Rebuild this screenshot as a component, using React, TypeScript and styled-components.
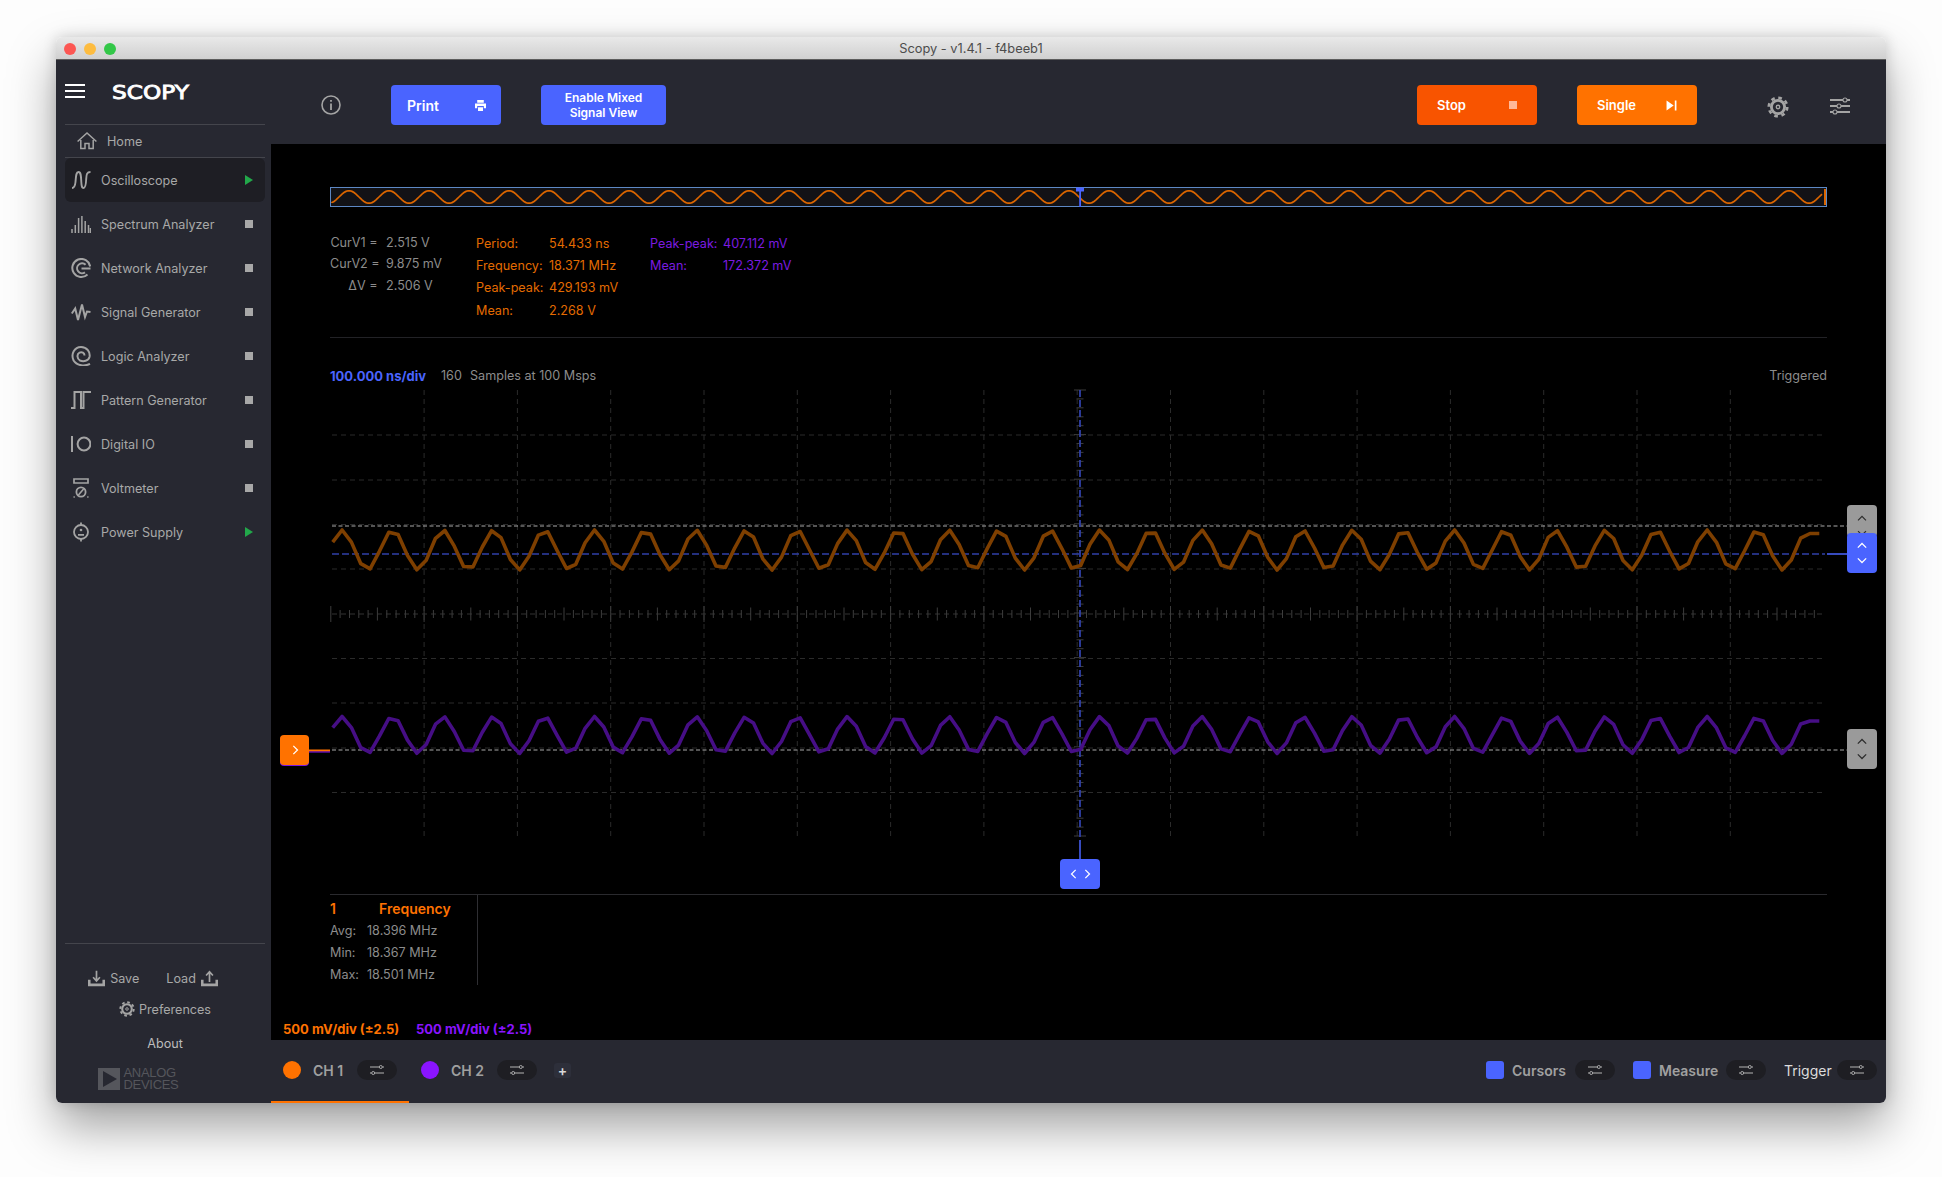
import React from "react";
import styled, { createGlobalStyle } from "styled-components";

const BLUE = "#4a64ff";
const ORANGE = "#ff7200";
const PURPLE = "#8a14ff";
const PANEL = "#272831";

const GlobalStyle = createGlobalStyle`
  html, body {
    margin: 0;
    padding: 0;
    background: #fdfdfd;
  }
  body {
    font-family: "Inter", "Liberation Sans", sans-serif;
    font-size: 12.6px;
    -webkit-font-smoothing: antialiased;
  }
`;

const Page = styled.div`
  width: 1942px;
  height: 1177px;
  padding: 37px 56px 0;
  box-sizing: border-box;
  overflow: hidden;
`;

const Window = styled.div`
  height: 1066px;
  display: flex;
  flex-direction: column;
  border-radius: 6px;
  overflow: hidden;
  box-shadow: 0 24px 48px rgba(0, 0, 0, 0.36), 0 0 14px rgba(0, 0, 0, 0.16);
`;

const TitleBar = styled.div`
  position: relative;
  height: 22px;
  padding-top: 1px;
  box-sizing: border-box;
  flex-shrink: 0;
  display: flex;
  align-items: center;
  justify-content: center;
  background: linear-gradient(#e9e9e9, #d0d0d0);
  color: #4c4c4c;
  font-size: 12.8px;
`;

const TitleEdge = styled.div`
  height: 1px;
  flex-shrink: 0;
  background: #5c5c5c;
`;

const Lights = styled.div`
  position: absolute;
  left: 8px;
  top: 6px;
  display: flex;
  gap: 8px;
`;

const Light = styled.span<{ $color: string }>`
  width: 12px;
  height: 12px;
  border-radius: 50%;
  background: ${(p) => p.$color};
`;

const Body = styled.div`
  flex: 1;
  display: flex;
  min-height: 0;
`;

const Sidebar = styled.aside`
  width: 215px;
  flex-shrink: 0;
  box-sizing: border-box;
  padding: 0 6px 0 9px;
  background: ${PANEL};
  display: flex;
  flex-direction: column;
  color: #a8a8a8;
`;

const Brand = styled.div`
  height: 65px;
  flex-shrink: 0;
  box-sizing: border-box;
  padding-top: 18px;
  display: flex;
  align-items: center;
  gap: 27px;
  border-bottom: 1px solid #44454c;
`;

const Hamburger = styled.div`
  width: 20px;
  height: 14px;
  margin-top: -20px;
  border-top: 2px solid #fff;
  border-bottom: 2px solid #fff;
  position: relative;
  box-sizing: border-box;
  &::after {
    content: "";
    position: absolute;
    left: 0;
    right: 0;
    top: 4px;
    height: 2px;
    background: #fff;
  }
`;

const Logo = styled.div`
  margin-top: -19px;
  color: #fff;
  font-family: "DejaVu Sans", sans-serif;
  font-weight: 400;
  font-size: 20px;
  line-height: 20px;
  -webkit-text-stroke: 0.9px #fff;
  transform: scaleX(1.16);
  transform-origin: left center;
`;

const HomeRow = styled.div`
  height: 33px;
  flex-shrink: 0;
  box-sizing: border-box;
  display: flex;
  align-items: center;
  gap: 10px;
  padding-left: 12px;
  border-bottom: 1px solid #44454c;
`;

const NavRow = styled.div<{ $active?: boolean }>`
  height: 44px;
  flex-shrink: 0;
  box-sizing: border-box;
  padding: 0 12px 0 6px;
  display: flex;
  align-items: center;
  gap: 10px;
  border-radius: 6px;
  background: ${(p) => (p.$active ? "#1e1e24" : "transparent")};
`;

const NavLabel = styled.span`
  flex: 1;
`;

const StopMark = styled.span`
  width: 8px;
  height: 8px;
  background: #a8a8a8;
`;

const PlayMark = styled.span`
  width: 0;
  height: 0;
  border-left: 8px solid #22a84a;
  border-top: 5px solid transparent;
  border-bottom: 5px solid transparent;
`;

const SideFoot = styled.div`
  margin-top: auto;
  height: 160px;
  box-sizing: border-box;
  border-top: 1px solid #44454c;
  display: flex;
  flex-direction: column;
  align-items: center;
`;

const SaveLoad = styled.div`
  margin: 25px 24px 0 0;
  display: flex;
  align-items: center;
  gap: 5px;
  height: 18px;
`;

const SaveGap = styled.span`
  width: 17px;
`;

const Preferences = styled.div`
  margin-top: 13px;
  display: flex;
  align-items: center;
  gap: 4px;
  height: 18px;
`;

const About = styled.div`
  margin-top: 17px;
  height: 18px;
  line-height: 18px;
  color: #bcbcbc;
`;

const Adi = styled.div`
  margin-top: 14px;
  margin-right: 54px;
  display: flex;
  gap: 4px;
  align-items: center;
  color: #55565c;
`;

const AdiMark = styled.div`
  width: 22px;
  height: 22px;
  background: #55565c;
  display: flex;
  align-items: center;
  justify-content: center;
`;

const AdiTriangle = styled.span`
  width: 0;
  height: 0;
  margin-left: 3px;
  border-left: 14px solid #272831;
  border-top: 8px solid transparent;
  border-bottom: 8px solid transparent;
`;

const AdiText = styled.div`
  font-family: "Liberation Sans", sans-serif;
  font-size: 13px;
  line-height: 12px;
  letter-spacing: -0.3px;
`;

const Main = styled.main`
  flex: 1;
  min-width: 0;
  display: flex;
  flex-direction: column;
`;

const Toolbar = styled.div`
  height: 84px;
  flex-shrink: 0;
  box-sizing: border-box;
  padding: 6px 35px 0 50px;
  display: flex;
  align-items: center;
  background: ${PANEL};
`;

const ToolButton = styled.div<{ $bg: string; $size?: number; $left?: number }>`
  width: ${(p) => p.$size ?? 120}px;
  height: 40px;
  margin-left: ${(p) => p.$left ?? 40}px;
  box-sizing: border-box;
  padding: 0 20px;
  display: flex;
  align-items: center;
  justify-content: space-between;
  border-radius: 4px;
  background: ${(p) => p.$bg};
  color: #fff;
  font-weight: 600;
  font-size: 13px;
`;

const PrintButton = styled(ToolButton)`
  padding: 0 15px 0 16px;
  font-size: 14px;
`;

const MixedButton = styled(ToolButton)`
  justify-content: center;
  text-align: center;
  padding: 1px 0 0;
  font-size: 12px;
  line-height: 14.7px;
`;

const Spacer = styled.div`
  flex: 1;
`;

const StopSquare = styled.span`
  width: 8px;
  height: 8px;
  background: #ffb898;
`;

const GearSlot = styled.div`
  margin-left: 70px;
  margin-top: 4px;
  display: flex;
`;

const TuneSlot = styled.div`
  margin-left: 40px;
  margin-top: 2px;
  display: flex;
`;

const Stage = styled.div`
  flex: 1;
  min-height: 0;
  box-sizing: border-box;
  padding: 43px 59px 0;
  background: #000;
  display: flex;
  flex-direction: column;
`;

const Overview = styled.svg`
  display: block;
  width: 1497px;
  height: 20px;
  flex-shrink: 0;
  overflow: visible;
`;

const Readouts = styled.div`
  margin-top: 25px;
  height: 89px;
  flex-shrink: 0;
  display: flex;
`;

const CursorTable = styled.div`
  width: 146px;
  display: grid;
  grid-template-columns: 47.5px 1fr;
  grid-auto-rows: 21.3px;
  column-gap: 8.5px;
  align-items: center;
  align-content: start;
  color: #8c8c8c;
`;

const CursorKey = styled.span`
  text-align: right;
  white-space: nowrap;
`;

const MeasureTable = styled.div<{ $color: string; $width: number }>`
  width: ${(p) => p.$width}px;
  display: grid;
  grid-template-columns: 73px 1fr;
  grid-auto-rows: 22.3px;
  align-items: center;
  align-content: start;
  color: ${(p) => p.$color};
`;

const Rule = styled.div`
  height: 1px;
  flex-shrink: 0;
  background: #222226;
`;

const ReadoutRule = styled(Rule)`
  margin-top: 16px;
`;

const TimeRow = styled.div`
  margin-top: 30px;
  height: 16px;
  line-height: 16px;
  flex-shrink: 0;
  display: flex;
  color: #8c8c8c;
`;

const TimeDiv = styled.span`
  width: 111px;
  color: ${BLUE};
  font-weight: 700;
  font-size: 13px;
`;

const SampleCount = styled.span`
  width: 29px;
`;

const TimeEnd = styled.span`
  margin-left: auto;
`;

const PlotWrap = styled.div`
  position: relative;
  margin-top: 6px;
  height: 447px;
  flex-shrink: 0;
`;

const PlotSvg = styled.svg`
  display: block;
  width: 1497px;
  height: 447px;
  overflow: visible;
`;

const Handle = styled.div<{ $bg: string; $w: number; $h: number }>`
  position: absolute;
  width: ${(p) => p.$w}px;
  height: ${(p) => p.$h}px;
  border-radius: 4px;
  background: ${(p) => p.$bg};
  display: flex;
  flex-direction: column;
  align-items: center;
  justify-content: center;
  gap: 4px;
`;

const GreyTop = styled(Handle)`
  right: -50px;
  top: 115px;
  justify-content: flex-start;
  padding-top: 9px;
  box-sizing: border-box;
  overflow: hidden;
`;

const BlueSide = styled(Handle)`
  right: -50px;
  top: 143px;
`;

const GreyBottom = styled(Handle)`
  right: -50px;
  top: 339px;
`;

const OrangeSide = styled(Handle)`
  left: -50px;
  top: 345px;
  box-shadow: 0 1px 0 #7a14e0;
`;

const CursorHandle = styled(Handle)`
  left: 730px;
  top: 469px;
  flex-direction: row;
  gap: 3px;
`;

const MeasureRule = styled(Rule)`
  margin-top: 57px;
  background: #2a2a2e;
`;

const StatsBox = styled.div`
  width: 148px;
  height: 90px;
  flex-shrink: 0;
  box-sizing: border-box;
  padding-top: 2px;
  border-right: 1px solid #2e2e32;
  display: grid;
  grid-template-columns: 37px 1fr;
  grid-auto-rows: 22px;
  align-items: center;
  color: #8c8c8c;
`;

const StatTitle = styled.span`
  color: ${ORANGE};
  font-weight: 600;
  font-size: 14px;
`;

const StatHead = styled.div`
  grid-column: 1 / -1;
  display: grid;
  grid-template-columns: 49px 1fr;
`;

const ScaleRow = styled.div`
  margin: 36px 0 0 -47px;
  height: 16px;
  line-height: 16px;
  display: flex;
  flex-shrink: 0;
  font-weight: 700;
  font-size: 13px;
`;

const ScaleLabel = styled.span<{ $color: string; $width: number }>`
  width: ${(p) => p.$width}px;
  color: ${(p) => p.$color};
`;

const BottomBar = styled.div`
  position: relative;
  height: 63px;
  flex-shrink: 0;
  box-sizing: border-box;
  padding: 0 9px 3px 12px;
  display: flex;
  align-items: center;
  background: ${PANEL};
  color: #a0a0a0;
  font-weight: 600;
  font-size: 14px;
`;

const ActiveTab = styled.div`
  position: absolute;
  left: 0;
  bottom: 0;
  width: 138px;
  height: 2px;
  background: ${ORANGE};
`;

const Dot = styled.span<{ $color: string; $left?: number }>`
  width: 18px;
  height: 18px;
  margin-left: ${(p) => p.$left ?? 0}px;
  border-radius: 50%;
  background: ${(p) => p.$color};
`;

const ChannelName = styled.span<{ $left: number; $width: number }>`
  margin-left: ${(p) => p.$left}px;
  width: ${(p) => p.$width}px;
`;

const TunePill = styled.span<{ $left?: number }>`
  width: 40px;
  height: 20px;
  margin-left: ${(p) => p.$left ?? 0}px;
  border-radius: 10px;
  background: #1e1e23;
  display: flex;
  align-items: center;
  justify-content: center;
`;

const PlusBox = styled.span`
  width: 17px;
  height: 15px;
  margin-left: 17px;
  border-radius: 3px;
  background: #2d2f3a;
  color: #d8d8d8;
  font-size: 14px;
  line-height: 15px;
  text-align: center;
`;

const Toggle = styled.span<{ $left: number }>`
  width: 18px;
  height: 18px;
  margin-left: ${(p) => p.$left}px;
  border-radius: 3px;
  background: ${BLUE};
`;

const TriggerName = styled(ChannelName)`
  color: #dcdcdc;
  font-weight: 400;
`;

/* ---- drawings ---- */

const Glyph = styled.svg.attrs({ viewBox: "0 0 20 20", fill: "none" })<{ $size?: number }>`
  width: ${(p) => p.$size ?? 20}px;
  height: ${(p) => p.$size ?? 20}px;
  flex-shrink: 0;
  stroke: #a4a4a4;
  stroke-width: 1.7;
`;

const Wave = () => (
  <Glyph>
    <path
      strokeWidth="1.9"
      d="M1 18C3 18 4 17 4.5 12 5 6 5 2 7.5 2 10 2 10 6 10.3 12 10.6 17 11 18 12.5 18 14.5 18 15 14 15.2 9 15.4 4 16 2 19.5 2"
    />
  </Glyph>
);

const Spectrum = () => (
  <Glyph>
    <path
      strokeWidth="1.5"
      d="M1 19V15M4.3 19V11M7.6 19V4M10.9 19V2M14.2 19V7M17.5 19V11"
    />
    <path strokeWidth="1.5" d="M19.4 19V14" />
  </Glyph>
);

const Network = () => (
  <Glyph>
    <path strokeWidth="2" d="M16.5 16.5A9 9 0 1 1 19.2 8.5" />
    <path strokeWidth="2" d="M19.5 10.5H10.5M14 14.4A5 5 0 1 1 14.6 6.8" />
  </Glyph>
);

const SignalGen = () => (
  <Glyph>
    <path strokeWidth="2" d="M0.8 11.5 4.2 6.5 7 18 11 2.5 14 15 16 9.5 19.5 10" />
  </Glyph>
);

const Logic = () => (
  <Glyph>
    <path
      strokeWidth="2"
      d="M19 17.8C14 20.5 6 20 2.6 14.5-.5 8 3.5 1 10 1 16 1 19.5 6 18.5 11 17.5 15 12.5 16 9 14.5 6 13 5.5 8 8.5 6.6 11 5.5 13.5 7 13.5 9.5"
    />
  </Glyph>
);

const Pattern = () => (
  <Glyph>
    <path strokeWidth="2" d="M0 18H3.5V2H10V18H12.5V2H20" />
  </Glyph>
);

const DigitalIo = () => (
  <Glyph>
    <path strokeWidth="2" d="M1 2V18" />
    <circle cx="13" cy="10" r="6.4" strokeWidth="2" />
  </Glyph>
);

const Voltmeter = () => (
  <Glyph>
    <path strokeWidth="1.7" d="M3 1H17V5H3Z" />
    <circle cx="10" cy="14" r="4.6" strokeWidth="1.8" />
    <path strokeWidth="1.6" d="M7.4 17 12.6 11M2.5 19H3.8M16.2 19H17.5" />
  </Glyph>
);

const Power = () => (
  <Glyph>
    <circle cx="10" cy="10" r="7" strokeWidth="1.8" />
    <path strokeWidth="1.8" d="M10 .5V3M10 17V19.5M7 12.8H13" />
    <circle cx="10" cy="8" r="1.3" fill="#a4a4a4" stroke="none" />
  </Glyph>
);

const HomeIcon = () => (
  <Glyph>
    <path strokeWidth="1.5" d="M.6 10.5 10 2l9.4 8.5M3.8 9V17.5H8V12.5H12V17.5H16.2V9" />
  </Glyph>
);

const TrayArrow = ({ up }: { up?: boolean }) => (
  <Glyph $size={17}>
    <path strokeWidth="3" d="M1.5 11.5V17.5H18.5V11.5" />
    <path
      strokeWidth="2"
      d={up ? "M10 14V3M6 6.5 10 2 14 6.5" : "M10 1V12M6 8.5 10 13 14 8.5"}
    />
  </Glyph>
);

const Gear = ({ size = 22 }: { size?: number }) => (
  <Glyph $size={size}>
    <circle cx="10" cy="10" r="6" strokeWidth="2.6" />
    <circle cx="10" cy="10" r="8.4" strokeWidth="2.4" strokeDasharray="3.3 3.3" />
    <circle cx="10" cy="10" r="1.6" strokeWidth="1.2" />
  </Glyph>
);

const InfoIcon = () => (
  <Glyph>
    <circle cx="10" cy="10" r="9" strokeWidth="1.6" />
    <path strokeWidth="1.8" d="M10 8.6V15M10 5V6.8" />
  </Glyph>
);

const Printer = () => (
  <Glyph $size={11}>
    <path stroke="none" fill="#fff" d="M4 0H16V5H4ZM0 6.5H20V15H16V11H4V15H0ZM5.5 13H14.5V20H5.5Z" />
  </Glyph>
);

const StepIcon = () => (
  <Glyph $size={11}>
    <path stroke="none" fill="#fff" d="M1 1 14 10 1 19ZM16 1H19V19H16Z" />
  </Glyph>
);

const TuneLarge = () => (
  <svg width="22" height="20" viewBox="0 0 22 20" fill="none" stroke="#a4a4a4">
    <path strokeWidth="1.8" d="M1 4H14M18 4H21M1 10H8M12 10H21M1 16H4M8 16H21" />
    <circle cx="16" cy="4" r="2" strokeWidth="1.1" />
    <circle cx="10" cy="10" r="2" strokeWidth="1.1" />
    <circle cx="6" cy="16" r="2" strokeWidth="1.1" />
  </svg>
);

const TuneSmall = () => (
  <svg width="14" height="12" viewBox="0 0 14 12" fill="none" stroke="#b4b4b4">
    <path strokeWidth="1.1" d="M0 3H9M12.5 3H14M0 9H1.5M5 9H14" />
    <circle cx="10.8" cy="3" r="1.5" strokeWidth="0.9" />
    <circle cx="3.2" cy="9" r="1.5" strokeWidth="0.9" />
  </svg>
);

const Chevron = ({ dir, color }: { dir: "up" | "down" | "left" | "right"; color: string }) => {
  const shapes = {
    up: "M1 8 6 3 11 8",
    down: "M1 4 6 9 11 4",
    left: "M8 1 3 6 8 11",
    right: "M4 1 9 6 4 11",
  };
  return (
    <svg width="10" height="10" viewBox="0 0 12 12" fill="none" stroke={color} strokeWidth="1.5">
      <path d={shapes[dir]} />
    </svg>
  );
};

/* ---- scope traces ---- */

const sampleStep = 9.35;
const samplesPerPeriod = 5.407;

// 160 samples, the last ones hold flat like the capture does
function tracePoints(center: number, amp: number, endY: number) {
  const pts: string[] = [];
  for (let i = 0; i < 160; i++) {
    const x = 332.7 + i * sampleStep;
    const y = center - amp * Math.cos((2 * Math.PI * (i - 1)) / samplesPerPeriod);
    pts.push(`${x.toFixed(1)},${(i >= 158 ? endY : y).toFixed(1)}`);
  }
  return pts.join(" ");
}

function overviewPath() {
  let d = "M2 15";
  for (let x = 2; x <= 1493; x += 2) {
    const y = 9 - 6.3 * Math.cos((2 * Math.PI * (x - 19)) / 40);
    d += `L${x} ${y.toFixed(2)}`;
  }
  return d;
}

const gridXs = Array.from({ length: 15 }, (_, k) => 330.8 + 93.3 * (k + 1));
const gridYs = [435, 480, 524.5, 569, 658.5, 703, 748, 792.5];

const hTicks = Array.from({ length: 160 }, (_, k) => {
  const x = 330.8 + (93.3 / 10) * k;
  const h = k % 10 === 0 ? 8 : k % 5 === 0 ? 6.5 : 4;
  return `M${x.toFixed(1)} ${614 - h}V${614 + h}`;
}).join("");

const vTicks = Array.from({ length: 51 }, (_, k) => {
  const y = 390 + 8.92 * k;
  const w = k % 5 === 0 ? 6 : 3.5;
  return `M${1080 - w} ${y.toFixed(1)}H${1080 + w}`;
}).join("");

const Scope = () => (
  <PlotSvg viewBox="330 390 1497 447" fill="none">
    <g stroke="#2b2b2b" strokeWidth="1" strokeDasharray="5 4">
      {gridXs.map((x) => (
        <path key={x} d={`M${x} 390V837`} />
      ))}
      {gridYs.map((y) => (
        <path key={y} d={`M332 ${y}H1824`} />
      ))}
    </g>
    <path d="M332 614H1824" stroke="#333" strokeDasharray="5 4" />
    <path d={hTicks} stroke="#3c3c3c" />
    <path d={vTicks} stroke="#3c3c3c" />
    <path d="M332 526H1847M332 750H1847" stroke="#aaa" strokeDasharray="4 2.5" />
    <path d="M332 554H1825" stroke="#3040a8" strokeWidth="1.5" strokeDasharray="7 3" />
    <path d="M1827 554H1847" stroke={BLUE} strokeWidth="1.5" />
    <path d="M1080 390V837" stroke="#3040a8" strokeWidth="1.8" strokeDasharray="7 3" />
    <path d="M1080 840V860" stroke={BLUE} strokeWidth="1.5" />
    <polyline
      points={tracePoints(550, 20, 533.5)}
      stroke="#7e3f00"
      strokeWidth="3.6"
      strokeLinejoin="round"
    />
    <polyline
      points={tracePoints(735, 18.5, 721)}
      stroke="#460e85"
      strokeWidth="3.6"
      strokeLinejoin="round"
    />
    <path d="M309 750.5H330" stroke={ORANGE} strokeWidth="2" />
    <path d="M309 752H330" stroke="#8a14ff" strokeWidth="1" />
  </PlotSvg>
);

const MiniScope = () => (
  <Overview viewBox="0 0 1497 20" fill="none">
    <rect x="0.5" y="0.5" width="1496" height="19" fill="#121216" stroke="#5d88c4" />
    <path d={overviewPath()} transform="translate(0 1)" stroke="#d96500" strokeWidth="1.7" />
    <path d="M1495 2V18" stroke="#d96500" strokeWidth="2" />
    <rect x="746" y="0.5" width="8" height="4" fill={BLUE} />
    <rect x="749.2" y="1" width="1.8" height="19" fill={BLUE} />
  </Overview>
);

const tools: { name: string; icon: React.ReactNode; running?: boolean }[] = [
  { name: "Oscilloscope", icon: <Wave />, running: true },
  { name: "Spectrum Analyzer", icon: <Spectrum /> },
  { name: "Network Analyzer", icon: <Network /> },
  { name: "Signal Generator", icon: <SignalGen /> },
  { name: "Logic Analyzer", icon: <Logic /> },
  { name: "Pattern Generator", icon: <Pattern /> },
  { name: "Digital IO", icon: <DigitalIo /> },
  { name: "Voltmeter", icon: <Voltmeter /> },
  { name: "Power Supply", icon: <Power />, running: true },
];

const ch1Stats = [
  ["Period:", "54.433 ns"],
  ["Frequency:", "18.371 MHz"],
  ["Peak-peak:", "429.193 mV"],
  ["Mean:", "2.268 V"],
];

const ch2Stats = [
  ["Peak-peak:", "407.112 mV"],
  ["Mean:", "172.372 mV"],
];

const cursorRows = [
  ["CurV1 =", "2.515 V"],
  ["CurV2 =", "9.875 mV"],
  ["ΔV =", "2.506 V"],
];

const freqRows = [
  ["Avg:", "18.396 MHz"],
  ["Min:", "18.367 MHz"],
  ["Max:", "18.501 MHz"],
];

export default function App() {
  return (
    <Page>
      <GlobalStyle />
      <Window>
        <TitleBar>
          <Lights>
            <Light $color="#fc5753" />
            <Light $color="#fdbc40" />
            <Light $color="#33c748" />
          </Lights>
          Scopy - v1.4.1 - f4beeb1
        </TitleBar>
        <TitleEdge />
        <Body>
          <Sidebar>
            <Brand>
              <Hamburger />
              <Logo>SCOPY</Logo>
            </Brand>
            <HomeRow>
              <HomeIcon />
              <span>Home</span>
            </HomeRow>
            {tools.map((t, i) => (
              <NavRow key={t.name} $active={i === 0}>
                {t.icon}
                <NavLabel>{t.name}</NavLabel>
                {t.running ? <PlayMark /> : <StopMark />}
              </NavRow>
            ))}
            <SideFoot>
              <SaveLoad>
                <TrayArrow />
                <span>Save</span>
                <SaveGap />
                <span>Load</span>
                <TrayArrow up />
              </SaveLoad>
              <Preferences>
                <Gear size={16} />
                <span>Preferences</span>
              </Preferences>
              <About>About</About>
              <Adi>
                <AdiMark>
                  <AdiTriangle />
                </AdiMark>
                <AdiText>
                  ANALOG
                  <br />
                  DEVICES
                </AdiText>
              </Adi>
            </SideFoot>
          </Sidebar>
          <Main>
            <Toolbar>
              <InfoIcon />
              <PrintButton $bg={BLUE} $size={110} $left={50}>
                Print
                <Printer />
              </PrintButton>
              <MixedButton $bg={BLUE} $size={125}>
                Enable Mixed
                <br />
                Signal View
              </MixedButton>
              <Spacer />
              <ToolButton $bg="#f85400">
                Stop
                <StopSquare />
              </ToolButton>
              <ToolButton $bg={ORANGE}>
                Single
                <StepIcon />
              </ToolButton>
              <GearSlot>
                <Gear />
              </GearSlot>
              <TuneSlot>
                <TuneLarge />
              </TuneSlot>
            </Toolbar>
            <Stage>
              <MiniScope />
              <Readouts>
                <CursorTable>
                  {cursorRows.map(([k, v]) => (
                    <React.Fragment key={k}>
                      <CursorKey>{k}</CursorKey>
                      <span>{v}</span>
                    </React.Fragment>
                  ))}
                </CursorTable>
                <MeasureTable $color="#e36b00" $width={174}>
                  {ch1Stats.map(([k, v]) => (
                    <React.Fragment key={k}>
                      <span>{k}</span>
                      <span>{v}</span>
                    </React.Fragment>
                  ))}
                </MeasureTable>
                <MeasureTable $color="#7c1be0" $width={200}>
                  {ch2Stats.map(([k, v]) => (
                    <React.Fragment key={k}>
                      <span>{k}</span>
                      <span>{v}</span>
                    </React.Fragment>
                  ))}
                </MeasureTable>
              </Readouts>
              <ReadoutRule />
              <TimeRow>
                <TimeDiv>100.000 ns/div</TimeDiv>
                <SampleCount>160</SampleCount>
                <span>Samples at 100 Msps</span>
                <TimeEnd>Triggered</TimeEnd>
              </TimeRow>
              <PlotWrap>
                <Scope />
                <GreyTop $bg="#9a9a9a" $w={30} $h={32}>
                  <Chevron dir="up" color="#2c2c2c" />
                  <Chevron dir="down" color="#2c2c2c" />
                </GreyTop>
                <BlueSide $bg={BLUE} $w={30} $h={40}>
                  <Chevron dir="up" color="#fff" />
                  <Chevron dir="down" color="#fff" />
                </BlueSide>
                <GreyBottom $bg="#9a9a9a" $w={30} $h={40}>
                  <Chevron dir="up" color="#2c2c2c" />
                  <Chevron dir="down" color="#2c2c2c" />
                </GreyBottom>
                <OrangeSide $bg={ORANGE} $w={29} $h={30}>
                  <Chevron dir="right" color="#fff" />
                </OrangeSide>
                <CursorHandle $bg={BLUE} $w={40} $h={30}>
                  <Chevron dir="left" color="#fff" />
                  <Chevron dir="right" color="#fff" />
                </CursorHandle>
              </PlotWrap>
              <MeasureRule />
              <StatsBox>
                <StatHead>
                  <StatTitle>1</StatTitle>
                  <StatTitle>Frequency</StatTitle>
                </StatHead>
                {freqRows.map(([k, v]) => (
                  <React.Fragment key={k}>
                    <span>{k}</span>
                    <span>{v}</span>
                  </React.Fragment>
                ))}
              </StatsBox>
              <ScaleRow>
                <ScaleLabel $color={ORANGE} $width={133}>
                  500 mV/div (±2.5)
                </ScaleLabel>
                <ScaleLabel $color={PURPLE} $width={133}>
                  500 mV/div (±2.5)
                </ScaleLabel>
              </ScaleRow>
            </Stage>
            <BottomBar>
              <ActiveTab />
              <Dot $color={ORANGE} />
              <ChannelName $left={12} $width={44}>
                CH 1
              </ChannelName>
              <TunePill>
                <TuneSmall />
              </TunePill>
              <Dot $color={PURPLE} $left={24} />
              <ChannelName $left={12} $width={46}>
                CH 2
              </ChannelName>
              <TunePill>
                <TuneSmall />
              </TunePill>
              <PlusBox>+</PlusBox>
              <Spacer />
              <Toggle $left={0} />
              <ChannelName $left={8} $width={63}>
                Cursors
              </ChannelName>
              <TunePill>
                <TuneSmall />
              </TunePill>
              <Toggle $left={18} />
              <ChannelName $left={8} $width={67}>
                Measure
              </ChannelName>
              <TunePill>
                <TuneSmall />
              </TunePill>
              <TriggerName $left={18} $width={53}>
                Trigger
              </TriggerName>
              <TunePill>
                <TuneSmall />
              </TunePill>
            </BottomBar>
          </Main>
        </Body>
      </Window>
    </Page>
  );
}
